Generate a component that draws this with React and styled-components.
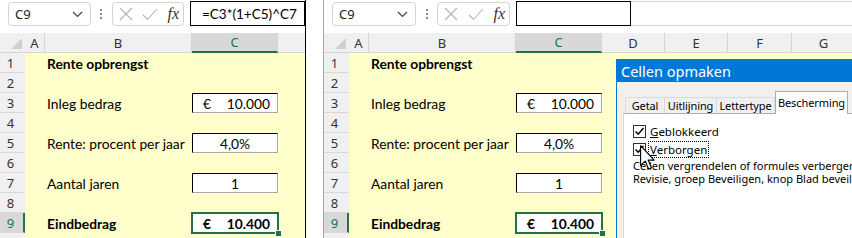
import React from "react";
import styled, { createGlobalStyle } from "styled-components";

const UI_FONT = `"Noto Sans", "Open Sans", sans-serif`;
const CELL_FONT = `Lato, "Liberation Sans", sans-serif`;
const GREEN = "#217346";

const GlobalStyle = createGlobalStyle`
  html, body { margin: 0; padding: 0; background: #fff; }
  body { width: 852px; height: 238px; overflow: hidden; }
`;

const rows = [
  { n: 1, B: { text: "Rente opbrengst", bold: true } },
  { n: 2 },
  { n: 3, B: { text: "Inleg bedrag" }, C: { cur: "€", value: "10.000" } },
  { n: 4 },
  { n: 5, B: { text: "Rente: procent per jaar" }, C: { value: "4,0%" } },
  { n: 6 },
  { n: 7, B: { text: "Aantal jaren" }, C: { value: "1" } },
  { n: 8 },
  { n: 9, B: { text: "Eindbedrag", bold: true }, C: { cur: "€", value: "10.400", bold: true, selected: true } },
  { n: 10 },
];

const letters = ["A", "B", "C", "D", "E", "F", "G"];

const Page = styled.div`
  display: flex;
  width: 852px;
  height: 238px;
  overflow: hidden;
  background: #fff;
`;

const Panel = styled.div`
  position: relative;
  flex: ${(p) => (p.$grow ? 1 : "none")};
  width: ${(p) => (p.$grow ? "auto" : "305px")};
  height: 238px;
  overflow: hidden;
  border-right: ${(p) => (p.$grow ? "none" : "1px solid #000")};
  border-left: ${(p) => (p.$grow ? "1px solid #a8a8a8" : "none")};
  margin-left: ${(p) => (p.$grow ? "17px" : "0")};
`;

const Toolbar = styled.div`
  display: flex;
  align-items: flex-start;
  height: 33px;
  padding-top: 2px;
  box-sizing: border-box;
  background: #fff;
`;

const NameBox = styled.div`
  margin-left: 8px;
  width: 84px;
  height: 24px;
  box-sizing: border-box;
  border: 1px solid #d4d4d4;
  border-radius: 4px;
  display: flex;
  align-items: center;
  justify-content: space-between;
  padding: 0 7px 0 6px;
  font-family: ${UI_FONT};
  font-size: 13px;
  color: #222;
`;

const Dots = styled.div`
  width: 21px;
  height: 24px;
  display: flex;
  flex-direction: column;
  align-items: center;
  justify-content: center;
  gap: 2px;
  span {
    width: 2px;
    height: 2px;
    background: #8a8a8a;
  }
`;

const FuncBox = styled.div`
  width: 73px;
  height: 24px;
  box-sizing: border-box;
  border: 1px solid #d4d4d4;
  border-radius: 4px;
  display: flex;
  align-items: center;
  justify-content: space-between;
  padding: 0 4px 0 6px;
`;

const Fx = styled.span`
  font-family: "Liberation Serif", "DejaVu Serif", serif;
  font-style: italic;
  font-size: 16px;
  color: #333;
`;

const FormulaBar = styled.div`
  flex: 1;
  margin-left: 6px;
  margin-top: -1px;
  height: 25px;
  box-sizing: border-box;
  border-top: 1px solid #d4d4d4;
  border-bottom: 1px solid #d4d4d4;
  display: flex;
`;

const FormulaBox = styled.div`
  width: 115px;
  height: 25px;
  margin-top: -1px;
  box-sizing: border-box;
  border: 1px solid #000;
  padding-left: 11px;
  display: flex;
  align-items: center;
  font-family: ${CELL_FONT};
  font-size: 13.5px;
  color: #000;
  flex: none;
  white-space: nowrap;
`;

const Sheet = styled.div`
  display: grid;
  grid-template-columns: 25px 20px 147px 86px 63px 63px 64px 64px;
  grid-auto-rows: 20px;
`;

const Corner = styled.div`
  background: #f0f0f0;
  border-bottom: 1px solid #d4d4d4;
  box-sizing: border-box;
  display: flex;
  align-items: flex-end;
  justify-content: flex-end;
  padding: 0 3px 3px 0;
`;

const ColHead = styled.div`
  background: ${(p) => (p.$selected ? "#d8d8d8" : "#f0f0f0")};
  border-right: 1px solid #d4d4d4;
  border-bottom: ${(p) => (p.$selected ? `2px solid ${GREEN}` : "1px solid #d4d4d4")};
  box-sizing: border-box;
  display: flex;
  align-items: center;
  justify-content: center;
  font-family: ${UI_FONT};
  font-size: 13px;
  color: ${(p) => (p.$selected ? GREEN : "#333")};
`;

const RowHead = styled.div`
  background: ${(p) => (p.$selected ? "#d8d8d8" : "#f0f0f0")};
  border-bottom: 1px solid #d8d8d8;
  border-right: ${(p) => (p.$selected ? `2px solid ${GREEN}` : "none")};
  box-sizing: border-box;
  display: flex;
  align-items: center;
  justify-content: center;
  padding-right: ${(p) => (p.$selected ? "2px" : "4px")};
  font-family: ${UI_FONT};
  font-size: 13px;
  color: ${(p) => (p.$selected ? GREEN : "#333")};
`;

const Cell = styled.div`
  background: #ffffcc;
  display: flex;
  align-items: center;
  padding-left: 2px;
  white-space: nowrap;
  font-family: ${CELL_FONT};
  font-size: 13.8px;
  font-weight: ${(p) => (p.$bold ? 700 : 400)};
  color: #000;
  overflow: visible;
`;

const BoxCell = styled.div`
  position: relative;
  background: #fff;
  box-sizing: border-box;
  border-top: 1px solid #000;
  border-left: 1px solid #000;
  border-right: 1px solid #a8a8a8;
  border-bottom: 1px solid #a8a8a8;
  display: flex;
  align-items: center;
  justify-content: ${(p) => (p.$split ? "space-between" : "center")};
  padding: ${(p) => (p.$split ? "0 7px 0 10px" : "0")};
  font-family: ${CELL_FONT};
  font-size: 13.8px;
  font-weight: ${(p) => (p.$bold ? 700 : 400)};
  color: #000;
  ${(p) =>
    p.$selected &&
    `
    &::after {
      content: "";
      position: absolute;
      inset: -2px;
      border: 2px solid ${GREEN};
    }
    &::before {
      content: "";
      position: absolute;
      right: -5px;
      bottom: -5px;
      width: 5px;
      height: 5px;
      background: ${GREEN};
      border: 1px solid #fff;
      z-index: 2;
    }
  `}
`;

const Dialog = styled.div`
  position: absolute;
  left: 292px;
  top: 59px;
  width: 300px;
  height: 200px;
  background: #f0f0f0;
  border-left: 1px solid #0078d7;
  box-sizing: border-box;
`;

const TitleBar = styled.div`
  height: 23px;
  background: #0078d7;
  color: #fff;
  display: flex;
  align-items: center;
  padding-left: 4px;
  font-family: ${UI_FONT};
  font-size: 14.5px;
`;

const TabStrip = styled.div`
  display: flex;
  align-items: flex-end;
  height: 31px;
  padding-left: 8px;
  position: relative;
  z-index: 1;
`;

const Tab = styled.div`
  width: ${(p) => p.$w}px;
  height: ${(p) => (p.$active ? 23 : 16)}px;
  box-sizing: border-box;
  background: ${(p) => (p.$active ? "#fff" : "#f0f0f0")};
  border: 1px solid ${(p) => (p.$active ? "#adadad" : "#d9d9d9")};
  border-bottom: none;
  border-left: ${(p) => (p.$first || p.$active ? undefined : "none")};
  margin-bottom: ${(p) => (p.$active ? "-1px" : "0")};
  display: flex;
  align-items: ${(p) => (p.$active ? "center" : "flex-end")};
  justify-content: center;
  font-family: ${UI_FONT};
  font-size: 11px;
  line-height: 14px;
  letter-spacing: -0.1px;
  color: #000;
  white-space: nowrap;
`;

const TabPanel = styled.div`
  margin-left: 6px;
  height: 140px;
  background: #fff;
  border-top: 1px solid #adadad;
  border-left: 1px solid #d9d9d9;
  padding: 8px 0 0 9px;
  font-family: ${UI_FONT};
  font-size: 11.5px;
  color: #000;
  white-space: nowrap;
`;

const CheckRow = styled.div`
  display: flex;
  align-items: center;
  gap: 3px;
  height: 18px;
`;

const Box = styled.span`
  width: 13px;
  height: 13px;
  box-sizing: border-box;
  border: 1px solid #333;
  background: #fff;
  display: flex;
  align-items: center;
  justify-content: center;
`;

const Label = styled.span`
  padding: 0 1px;
  line-height: 15px;
  outline: ${(p) => (p.$focus ? "1px dotted #000" : "none")};
  u {
    text-decoration: underline;
  }
`;

const Description = styled.div`
  margin-top: 1px;
  line-height: 13px;
  font-size: 11px;
`;

const Pointer = styled.svg`
  position: absolute;
  left: 23px;
  top: 86px;
`;

const Chevron = () => (
  <svg width="11" height="7" viewBox="0 0 11 7">
    <path d="M1 1 L5.5 5.5 L10 1" fill="none" stroke="#444" strokeWidth="1.2" />
  </svg>
);

const Cross = () => (
  <svg width="14" height="14" viewBox="0 0 14 14">
    <path d="M1 1 L13 13 M13 1 L1 13" stroke="#b4b4b4" strokeWidth="1.1" />
  </svg>
);

const Tick = () => (
  <svg width="16" height="13" viewBox="0 0 16 13">
    <path d="M1 7 L5.5 11.5 L15 1" fill="none" stroke="#b4b4b4" strokeWidth="1.1" />
  </svg>
);

const CheckMark = () => (
  <svg width="11" height="11" viewBox="0 0 11 11">
    <path d="M1.5 5.5 L4.2 8.2 L9.5 2" fill="none" stroke="#000" strokeWidth="1.5" />
  </svg>
);

const Toolbar1 = ({ formula }) => (
  <Toolbar>
    <NameBox>
      C9
      <Chevron />
    </NameBox>
    <Dots>
      <span />
      <span />
      <span />
    </Dots>
    <FuncBox>
      <Cross />
      <Tick />
      <Fx>fx</Fx>
    </FuncBox>
    <FormulaBar>
      <FormulaBox>{formula}</FormulaBox>
    </FormulaBar>
  </Toolbar>
);

const Grid = () => (
  <Sheet>
    <Corner>
      <svg width="11" height="11" viewBox="0 0 11 11">
        <polygon points="11,0 11,11 0,11" fill="#d0d0d0" />
      </svg>
    </Corner>
    {letters.map((l) => (
      <ColHead key={l} $selected={l === "C"}>
        {l}
      </ColHead>
    ))}
    {rows.map((r) => (
      <React.Fragment key={r.n}>
        <RowHead $selected={r.n === 9}>{r.n}</RowHead>
        {letters.map((l) => {
          const c = r[l];
          if (l === "C" && c) {
            return (
              <BoxCell key={l} $split={!!c.cur} $bold={c.bold} $selected={c.selected}>
                {c.cur && <span>{c.cur}</span>}
                <span>{c.value}</span>
              </BoxCell>
            );
          }
          return (
            <Cell key={l} $bold={c && c.bold}>
              {c ? c.text : ""}
            </Cell>
          );
        })}
      </React.Fragment>
    ))}
  </Sheet>
);

const tabs = [
  { label: "Getal", w: 40 },
  { label: "Uitlijning", w: 52 },
  { label: "Lettertype", w: 58 },
  { label: "Bescherming", w: 73, active: true },
];

const FormatDialog = () => (
  <Dialog>
    <TitleBar>Cellen opmaken</TitleBar>
    <TabStrip>
      {tabs.map((t, i) => (
        <Tab key={t.label} $w={t.w} $active={t.active} $first={i === 0}>
          {t.label}
        </Tab>
      ))}
    </TabStrip>
    <TabPanel>
      <CheckRow>
        <Box>
          <CheckMark />
        </Box>
        <Label>
          <u>G</u>eblokkeerd
        </Label>
      </CheckRow>
      <CheckRow>
        <Box>
          <CheckMark />
        </Box>
        <Label $focus>
          <u>V</u>erborgen
        </Label>
      </CheckRow>
      <Description>
        Cellen vergrendelen of formules verbergen heeft pas effect als u het blad beveiligt (tabblad
        <br />
        Revisie, groep Beveiligen, knop Blad beveiligen).
      </Description>
    </TabPanel>
    <Pointer width="16" height="26" viewBox="0 0 13 21">
      <path
        d="M0.5 0.5 L0.5 16.5 L4.2 13 L7 19.5 L9.3 18.5 L6.6 12.2 L11.5 12.2 Z"
        fill="#fff"
        stroke="#000"
        strokeWidth="0.9"
        strokeLinejoin="round"
      />
    </Pointer>
  </Dialog>
);

export default function App() {
  return (
    <>
      <GlobalStyle />
      <Page>
        <Panel>
          <Toolbar1 formula="=C3*(1+C5)^C7" />
          <Grid />
        </Panel>
        <Panel $grow>
          <Toolbar1 formula="" />
          <Grid />
          <FormatDialog />
        </Panel>
      </Page>
    </>
  );
}
